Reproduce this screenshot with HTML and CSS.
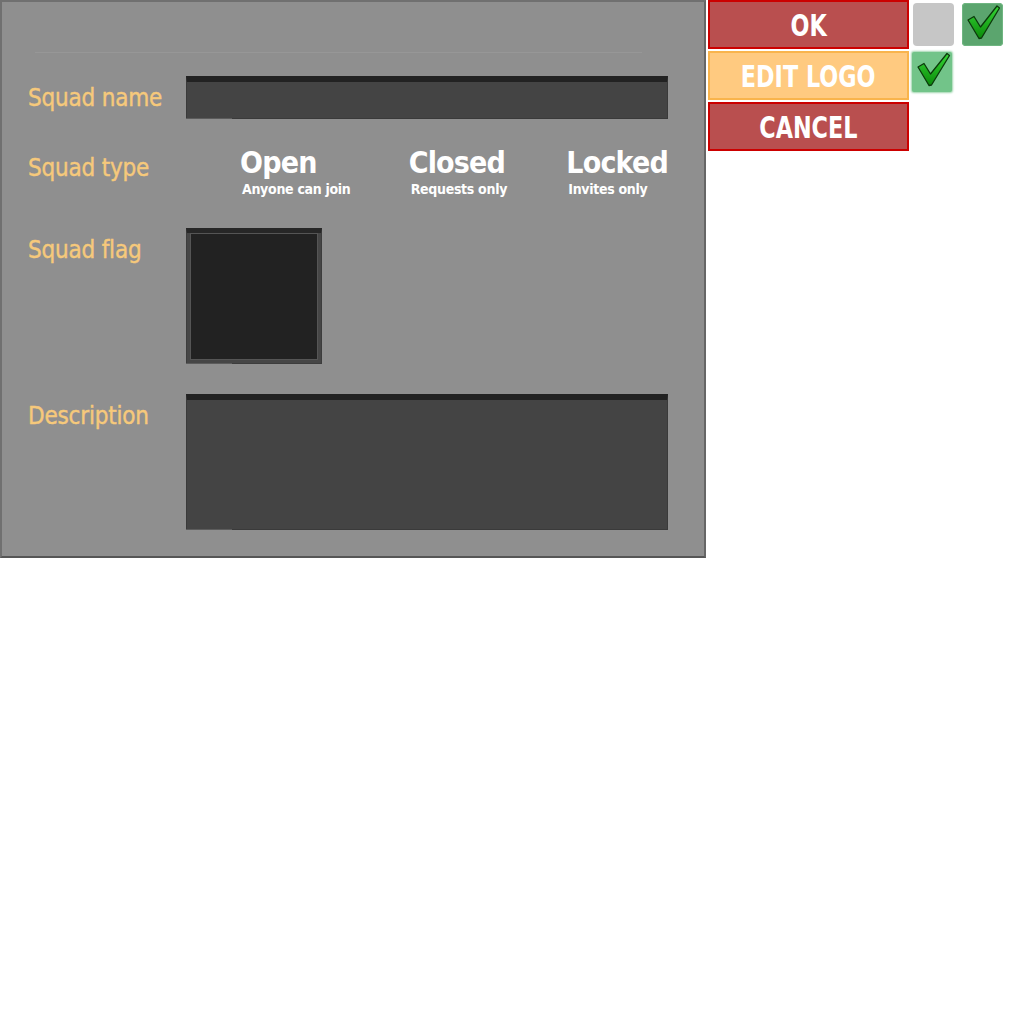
FILE: index.html
```
<!DOCTYPE html>
<html>
<head>
<meta charset="utf-8">
<title>Squad settings</title>
<link rel="stylesheet" href="styles.css">
</head>
<body>
<div class="screen">
  <div class="panel">
    <div class="panel-head"></div>
    <div class="form">
      <div class="label">Squad name</div>
      <div class="field"><div class="input"></div></div>

      <div class="label label-type">Squad type</div>
      <div class="field types">
        <div class="type type-open">
          <div class="type-name">Open</div>
          <div class="type-hint">Anyone can join</div>
        </div>
        <div class="type type-closed">
          <div class="type-name">Closed</div>
          <div class="type-hint">Requests only</div>
        </div>
        <div class="type type-locked">
          <div class="type-name">Locked</div>
          <div class="type-hint">Invites only</div>
        </div>
      </div>

      <div class="label">Squad flag</div>
      <div class="field"><div class="flag"><div class="flag-inner"></div></div></div>

      <div class="label">Description</div>
      <div class="field"><div class="input textarea"></div></div>
    </div>
  </div>

  <div class="buttons">
    <div class="btn btn-red"><span>OK</span></div>
    <div class="btn btn-orange"><span>EDIT LOGO</span></div>
    <div class="btn btn-red"><span>CANCEL</span></div>
  </div>

  <div class="checks">
    <div class="check-row">
      <div class="check check-off"></div>
      <div class="check check-on">
        <svg width="41" height="43" viewBox="0 0 41 43"><defs><linearGradient id="g1" x1="0" y1="0" x2="0" y2="1"><stop offset="0" stop-color="#36d636"/><stop offset="1" stop-color="#0a8a0a"/></linearGradient></defs><path d="M6 17 L12 13.5 L18.5 24 L35 3 L37.5 5 L19.5 35 L17 35.5 Z" fill="url(#g1)" stroke="#0b3a0b" stroke-width="1.3" stroke-linejoin="round"/></svg>
      </div>
    </div>
    <div class="check-row check-row2">
      <div class="check check-on check-soft">
        <svg width="40" height="40" viewBox="0 0 40 40"><defs><linearGradient id="g2" x1="0" y1="0" x2="0" y2="1"><stop offset="0" stop-color="#36d636"/><stop offset="1" stop-color="#0a8a0a"/></linearGradient></defs><path d="M6 15 L12 11.5 L18.5 22 L35 1.5 L37.5 3.5 L19.5 33 L17 33.5 Z" fill="url(#g2)" stroke="#0b3a0b" stroke-width="1.3" stroke-linejoin="round"/></svg>
      </div>
    </div>
  </div>
</div>
</body>
</html>
```
FILE: styles.css
```
html,body{margin:0;padding:0;background:#fff;}
body{font-family:"DejaVu Sans Condensed","DejaVu Sans",sans-serif;}
.screen{display:flex;align-items:flex-start;}

.panel{width:706px;height:558px;box-sizing:border-box;background:#8f8f8f;border:2px solid #707070;border-bottom-color:#565656;border-right-color:#666;}
.panel-head{height:50px;margin:0 62px 0 33px;border-bottom:1px solid #979797;}

.form{display:grid;grid-template-columns:158px 482px;padding:23px 0 0 26px;}
.label{color:#f6c97b;font-size:24px;line-height:28px;padding-top:8px;letter-spacing:-0.2px;-webkit-text-stroke:0.4px #f6c97b;}
.label-type{padding-top:11px;}

.input{height:43px;box-sizing:border-box;background:#444;border:1px solid #3a3a3a;border-top:6px solid #222;margin-bottom:24px;position:relative;}
.input:after{content:"";position:absolute;left:-1px;bottom:-1px;width:46px;height:1px;background:#5c5c5c;}
.textarea{height:136px;margin-bottom:0;}

.types{display:flex;height:61px;margin-bottom:21px;margin-top:3px;}
.type{color:#fff;font-weight:bold;}
.type-open{width:169px;padding-left:54px;}
.type-closed{width:158px;}
.type-name{font-size:30px;line-height:33px;letter-spacing:-0.8px;}
.type-hint{font-size:14px;line-height:16px;padding-left:2px;margin-top:2px;letter-spacing:-0.3px;}

.flag{width:136px;height:136px;box-sizing:border-box;background:#464646;border:1px solid #3d3d3d;border-top:5px solid #272727;padding:0 3px 3px;margin-bottom:30px;position:relative;}
.flag:after{content:"";position:absolute;left:-1px;bottom:-1px;width:46px;height:1px;background:#5c5c5c;}
.flag-inner{height:100%;box-sizing:border-box;background:#222;border:1px solid #555;}

.buttons{display:flex;flex-direction:column;gap:2px;margin-left:2px;width:201px;}
.btn{height:49px;box-sizing:border-box;border:2px solid #cc0000;color:#fff;font-weight:bold;font-size:31px;line-height:47px;text-align:center;}
.btn span{display:inline-block;transform:scaleX(0.8);}
.btn-red{background:#b94f4f;}
.btn-orange{background:#ffca80;border-color:#f9b44c;}

.checks{margin-left:4px;padding-top:3px;}
.check-row{display:flex;gap:8px;}
.check-row2{margin-top:6px;margin-left:-1px;}
.check{width:41px;height:43px;border-radius:4px;}
.check-off{background:#c6c6c6;}
.check-on{background:#5ba56e;box-shadow:inset 0 0 0 1px #6fb581;}
.check-soft{width:40px;height:40px;border-radius:2px;background:#72c489;box-shadow:0 0 2px 1px #9ed6ad;}
.check svg{display:block;}
```
